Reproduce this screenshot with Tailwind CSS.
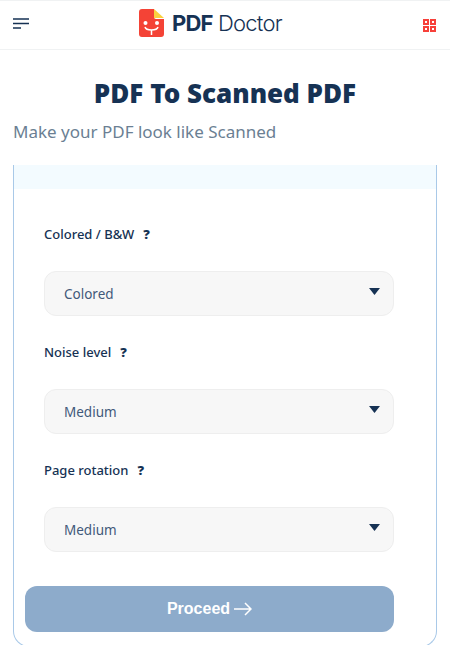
<!DOCTYPE html>
<html><head><meta charset="utf-8"><script src="https://cdn.jsdelivr.net/npm/@tailwindcss/browser@4"></script></head>
<body class="bg-white overflow-hidden">
<div class="w-[450px] h-[645px] overflow-hidden font-['Noto_Sans',sans-serif] text-[#163254]">
<header class="h-[50px] border-t border-b border-[#f0f2f3] relative flex items-center justify-between pl-[13px] pr-[14px]">
<svg class="w-4 h-3 mb-[4px]" viewBox="0 0 16 12"><path d="M0 2h16M0 6.500h16M0 11h8" stroke="#163254" stroke-width="1.500" fill="none"/></svg>
<div class="absolute left-[139px] top-[7px] flex items-center gap-[8px]">
<svg class="w-[25px] h-[28px]" viewBox="0 0 25 28"><path d="M3 0h12v8a2 2 0 0 0 2 2h8v15a3 3 0 0 1-3 3H3a3 3 0 0 1-3-3V3a3 3 0 0 1 3-3z" fill="#f44336"/><path d="M15 0l10 9H15z" fill="#fbd13f"/><circle cx="6.500" cy="14" r="2" fill="#fff"/><circle cx="18" cy="14" r="2" fill="#fff"/><path d="M6 18c1 4 12 4 13 0M12.500 21v5" stroke="#fff" stroke-width="1.500" fill="none"/></svg>
<span class="text-[22px] leading-[28px] font-['Inter',sans-serif] tracking-[-0.8px] mt-[1px]"><b class="font-bold">PDF</b> <span class="font-light">Doctor</span></span>
</div>
<svg class="w-[13px] h-[13px]" viewBox="0 0 13 13"><g fill="#fff" stroke="#f7403a" stroke-width="2"><rect x="1" y="1" width="4" height="4"/><rect x="8" y="1" width="4" height="4"/><rect x="1" y="8" width="4" height="4"/><rect x="8" y="8" width="4" height="4"/></g></svg>
</header>
<h1 class="mt-[24px] text-center text-[26px] leading-[38px] font-black font-['Noto_Sans',sans-serif]">PDF To Scanned PDF</h1>
<p class="pl-[13px] mt-[8px] text-[17px] leading-[24px] text-[#6b7f93]">Make your PDF look like Scanned</p>
<section class="mx-[13px] mt-[21px] h-[482px] border border-t-0 border-[#a9c9e8] rounded-b-[16px]">
<div class="h-[24px] bg-[#f3fbff]"></div>
<div class="pl-[30px] pr-[42px]">
<div class="mt-[36px] h-[20px] flex items-center gap-[9px] text-[13px] font-medium"><span>Colored / B&amp;W</span><b class="font-black">?</b></div>
<div class="mt-[26px] h-[45px] rounded-[12px] border border-[#eeeeee] bg-[#f7f7f7] pl-[19px] pr-[13px] pt-[1px] flex items-center justify-between text-[13.500px] text-[#42597a]"><span>Colored</span><svg class="w-[11px] h-[7px] -mt-[6px]" viewBox="0 0 11 7"><path d="M0 0h11L5.500 7z" fill="#163254"/></svg></div>
<div class="mt-[27px] h-[20px] flex items-center gap-[9px] text-[13px] font-medium"><span>Noise level</span><b class="font-black">?</b></div>
<div class="mt-[26px] h-[45px] rounded-[12px] border border-[#eeeeee] bg-[#f7f7f7] pl-[19px] pr-[13px] pt-[1px] flex items-center justify-between text-[13.500px] text-[#42597a]"><span>Medium</span><svg class="w-[11px] h-[7px] -mt-[6px]" viewBox="0 0 11 7"><path d="M0 0h11L5.500 7z" fill="#163254"/></svg></div>
<div class="mt-[27px] h-[20px] flex items-center gap-[9px] text-[13px] font-medium"><span>Page rotation</span><b class="font-black">?</b></div>
<div class="mt-[26px] h-[45px] rounded-[12px] border border-[#eeeeee] bg-[#f7f7f7] pl-[19px] pr-[13px] pt-[1px] flex items-center justify-between text-[13.500px] text-[#42597a]"><span>Medium</span><svg class="w-[11px] h-[7px] -mt-[6px]" viewBox="0 0 11 7"><path d="M0 0h11L5.500 7z" fill="#163254"/></svg></div>
</div>
<div class="ml-[11px] mt-[34px] w-[369px] h-[46px] rounded-[12px] bg-[#8dabcb] flex items-center justify-center gap-[4px] text-white font-bold text-[16px] font-['Liberation_Sans',sans-serif]"><span>Proceed</span><svg class="w-[18px] h-[14px]" viewBox="0 0 18 14"><path d="M0 7h17M11 1l6 6-6 6" stroke="#fff" stroke-width="1.500" fill="none"/></svg></div>
</section>
</div>
</body></html>
